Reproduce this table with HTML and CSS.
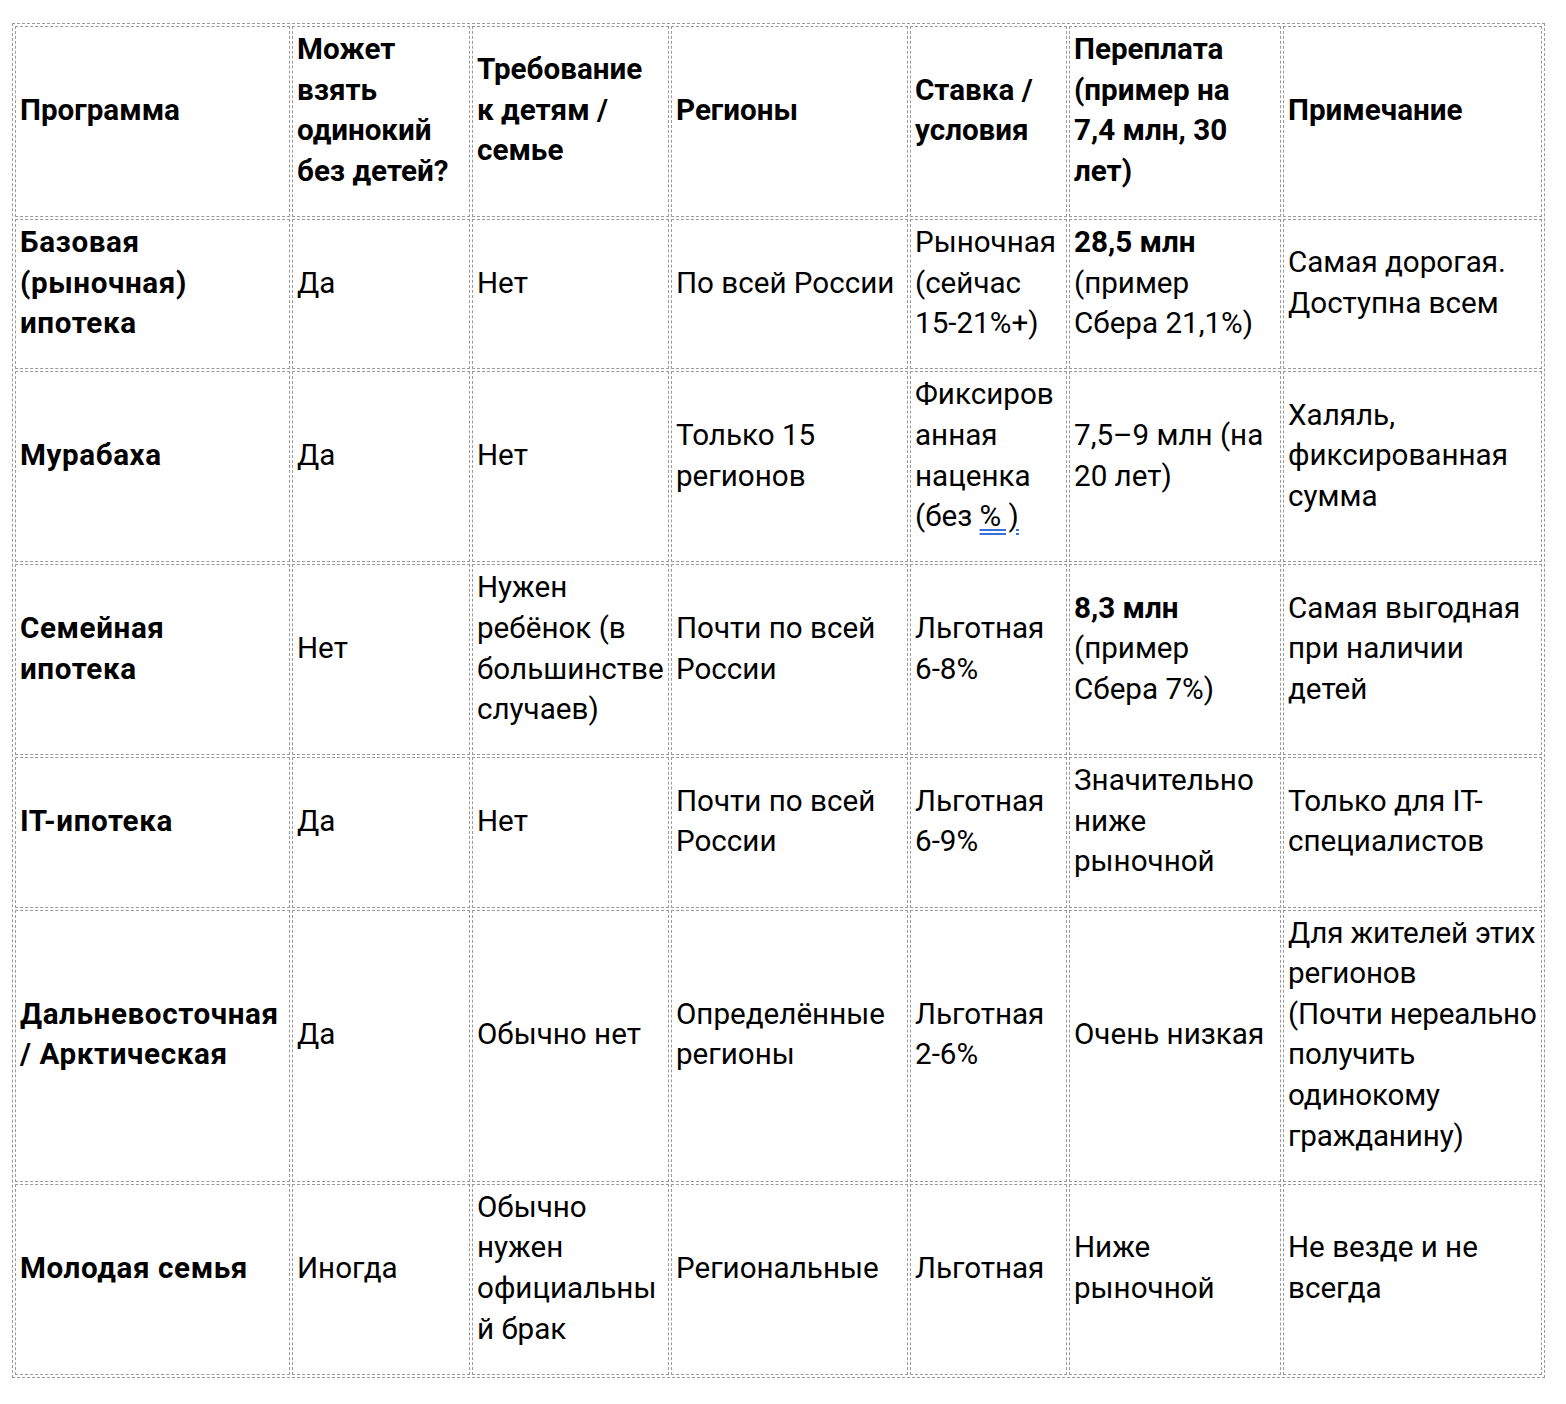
FILE: index.html
```html
<!DOCTYPE html>
<html lang="ru">
<head>
<meta charset="utf-8">
<title>Ипотечные программы</title>
<link rel="stylesheet" href="styles.css">
</head>
<body>
<div class="page">
<table class="grid">
  <colgroup>
    <col class="c1"><col class="c2"><col class="c3"><col class="c4"><col class="c5"><col class="c6"><col class="c7">
  </colgroup>
  <thead>
    <tr>
      <th>Программа</th>
      <th>Может взять одинокий без детей?</th>
      <th>Требование к детям / семье</th>
      <th>Регионы</th>
      <th>Ставка / условия</th>
      <th>Переплата (пример на 7,4 млн, 30 лет)</th>
      <th>Примечание</th>
    </tr>
  </thead>
  <tbody>
    <tr>
      <td class="name">Базовая (рыночная) ипотека</td>
      <td>Да</td>
      <td>Нет</td>
      <td>По всей России</td>
      <td>Рыночная (сейчас 15-21%+)</td>
      <td><b>28,5 млн</b><br>(пример Сбера 21,1%)</td>
      <td>Самая дорогая. Доступна всем</td>
    </tr>
    <tr>
      <td class="name">Мурабаха</td>
      <td>Да</td>
      <td>Нет</td>
      <td>Только 15 регионов</td>
      <td>Фиксированная наценка (без <span class="link">% )</span></td>
      <td>7,5–9 млн (на 20 лет)</td>
      <td>Халяль, фиксированная сумма</td>
    </tr>
    <tr>
      <td class="name">Семейная ипотека</td>
      <td>Нет</td>
      <td>Нужен ребёнок (в большинстве случаев)</td>
      <td>Почти по всей России</td>
      <td>Льготная 6-8%</td>
      <td><b>8,3 млн</b><br>(пример Сбера 7%)</td>
      <td>Самая выгодная при наличии детей</td>
    </tr>
    <tr>
      <td class="name">IT-ипотека</td>
      <td>Да</td>
      <td>Нет</td>
      <td>Почти по всей России</td>
      <td>Льготная 6-9%</td>
      <td>Значительно ниже рыночной</td>
      <td>Только для IT-специалистов</td>
    </tr>
    <tr>
      <td class="name">Дальневосточная / Арктическая</td>
      <td>Да</td>
      <td>Обычно нет</td>
      <td>Определённые регионы</td>
      <td>Льготная 2-6%</td>
      <td>Очень низкая</td>
      <td class="tight">Для жителей этих регионов<br><span class="keep">(Почти нереально</span> получить одинокому гражданину)</td>
    </tr>
    <tr>
      <td class="name">Молодая семья</td>
      <td>Иногда</td>
      <td>Обычно нужен официальный брак</td>
      <td>Региональные</td>
      <td>Льготная</td>
      <td>Ниже рыночной</td>
      <td>Не везде и не всегда</td>
    </tr>
  </tbody>
</table>
</div>
</body>
</html>
```

FILE: styles.css
```css
html, body {
  margin: 0;
  padding: 0;
  background: #ffffff;
}

.page {
  padding: 23px 12px 0 12px;
  font-family: Roboto, "Noto Sans", "Liberation Sans", sans-serif;
  font-size: 29.6px;
  line-height: 40.6px;
  color: #000000;
}

.grid {
  table-layout: fixed;
  width: 1533px;
  border: 1px dashed #9a9a9a;
  border-spacing: 2px;
  border-collapse: separate;
}

.c1 { width: 275px; }
.c2 { width: 178px; }
.c3 { width: 197px; }
.c4 { width: 237px; }
.c5 { width: 157px; }
.c6 { width: 212px; }
.c7 { width: 259px; }

.grid th,
.grid td {
  box-sizing: border-box;
  border: 1px dashed #9a9a9a;
  padding: 2px 2px 24.6px 4px;
  text-align: left;
  vertical-align: middle;
  overflow-wrap: break-word;
  word-break: normal;
}

.grid th,
.grid td.name,
.grid b {
  font-weight: 700;
}

.grid td.name {
  letter-spacing: 0.6px;
}

.grid td.tight {
  padding-right: 0;
  letter-spacing: -0.15px;
}

.keep {
  white-space: nowrap;
}

.link {
  text-decoration: underline double;
  text-decoration-color: #3a6fd8;
  text-underline-offset: 3px;
}
```
